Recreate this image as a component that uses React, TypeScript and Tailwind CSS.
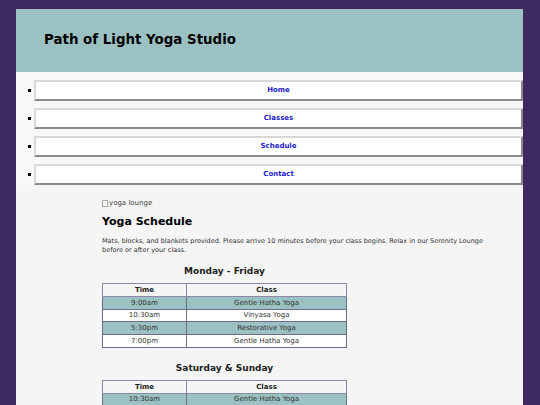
import React from "react";

const weekday = [
  ["9:00am", "Gentle Hatha Yoga"],
  ["10:30am", "Vinyasa Yoga"],
  ["5:30pm", "Restorative Yoga"],
  ["7:00pm", "Gentle Hatha Yoga"],
];
const weekend = [
  ["10:30am", "Gentle Hatha Yoga"],
  ["12:00pm", "Vinyasa Yoga"],
];

function Schedule({ title, rows }: { title: string; rows: string[][] }) {
  return (
    <div className="w-[245px]">
      <h3 className="text-center font-bold text-[9px] leading-[12px] mb-[6px]">{title}</h3>
      <table className="w-full border-collapse border border-[#8c88a8] text-[7px]">
        <thead>
          <tr className="h-[13px]">
            <th className="w-[84px] border border-[#8c88a8] font-bold">Time</th>
            <th className="border border-[#8c88a8] font-bold">Class</th>
          </tr>
        </thead>
        <tbody>
          {rows.map((r, i) => (
            <tr key={i} className={"h-[12.7px] " + (i % 2 === 0 ? "bg-[#9cc1c2]" : "bg-white")}>
              <td className="border border-[#6c6c8c] text-center text-[#333]">{r[0]}</td>
              <td className="border border-[#6c6c8c] text-center text-[#333]">{r[1]}</td>
            </tr>
          ))}
        </tbody>
      </table>
    </div>
  );
}

export default function App() {
  const nav = ["Home", "Classes", "Schedule", "Contact"];
  return (
    <div className="w-[540px] h-[405px] overflow-hidden bg-[#3e2960] pt-[9px] pl-[16px] pr-[17px]" style={{ fontFamily: '"DejaVu Sans", Verdana, sans-serif' }}>
      <div className="bg-[#f5f5f5] h-[400px]">
        <header className="bg-[#9cc1c2] h-[63px] flex items-center pl-[28px]">
          <h1 className="text-[13.4px] font-bold text-black">Path of Light Yoga Studio</h1>
        </header>
        <ul className="bg-[#f8f8f8] pt-[8px] pl-[18px] flex flex-col gap-[7px]">
          {nav.map((n) => (
            <li key={n} className="flex items-center">
              <span className="w-[3px] h-[3px] bg-black -ml-[6px] mr-[3px]"></span>
              <a className="flex-1 h-[21px] bg-white border-2 border-t-[#d8d8d8] border-l-[#d8d8d8] border-b-[#8a8a8a] border-r-[#8a8a8a] flex items-center justify-center text-[7px] font-bold text-[#1a1acc]">
                {n}
              </a>
            </li>
          ))}
        </ul>
        <main className="pl-[86px] pr-[20px] pt-[13px] text-[#222]">
          <div className="text-[7px] text-[#444] flex items-center h-[10px]">
            <span className="inline-block w-[6px] h-[7px] border border-[#aaa] mr-[1px]"></span>yoga lounge
          </div>
          <h2 className="text-[11px] font-bold text-black mt-[7px] leading-[14px]">Yoga Schedule</h2>
          <p className="text-[6.5px] leading-[9px] text-[#333] mt-[8px]">
            Mats, blocks, and blankets provided. Please arrive 10 minutes before your class begins. Relax in our Serenity Lounge before or after your class.
          </p>
          <div className="mt-[10px]">
            <Schedule title="Monday - Friday" rows={weekday} />
          </div>
          <div className="mt-[14px]">
            <Schedule title="Saturday &amp; Sunday" rows={weekend} />
          </div>
        </main>
      </div>
    </div>
  );
}
